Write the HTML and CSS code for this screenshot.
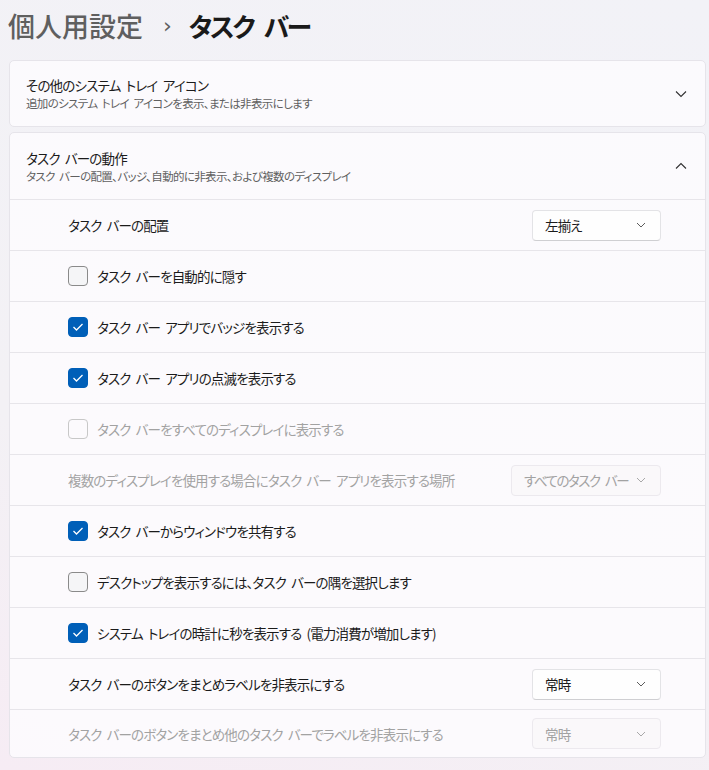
FILE: index.html
```html
<!DOCTYPE html>
<html lang="ja">
<head>
<meta charset="utf-8">
<link rel="stylesheet" href="styles.css">
</head>
<body>
<div class="page">
  <h1 class="crumb"><span class="parent">個人用設定</span><span class="sep">›</span><span class="current">タスク バー</span></h1>

  <section class="card">
    <div class="head short">
      <div class="htext">
        <div class="title">その他のシステム トレイ アイコン</div>
        <div class="sub">追加のシステム トレイ アイコンを表示、または非表示にします</div>
      </div>
      <svg class="chev" width="12" height="8" viewBox="0 0 12 8"><path d="M1 1.5 L6 6.5 L11 1.5" fill="none" stroke="#303030" stroke-width="1.1"/></svg>
    </div>
  </section>

  <section class="card">
    <div class="head">
      <div class="htext">
        <div class="title">タスク バーの動作</div>
        <div class="sub">タスク バーの配置、バッジ、自動的に非表示、および複数のディスプレイ</div>
      </div>
      <svg class="chev" width="12" height="8" viewBox="0 0 12 8"><path d="M1 6.5 L6 1.5 L11 6.5" fill="none" stroke="#303030" stroke-width="1.1"/></svg>
    </div>

    <div class="row">
      <span class="label">タスク バーの配置</span>
      <div class="select"><span>左揃え</span><svg width="10" height="6" viewBox="0 0 10 6"><path d="M1 1 L5 5 L9 1" fill="none" stroke="#5c5c5c" stroke-width="1"/></svg></div>
    </div>
    <div class="row">
      <span class="box"></span><span class="label">タスク バーを自動的に隠す</span>
    </div>
    <div class="row">
      <span class="box on"><svg width="12" height="10" viewBox="0 0 12 10"><path d="M1.5 5 L4.5 8 L10.5 2" fill="none" stroke="#fff" stroke-width="1.3"/></svg></span><span class="label">タスク バー アプリでバッジを表示する</span>
    </div>
    <div class="row">
      <span class="box on"><svg width="12" height="10" viewBox="0 0 12 10"><path d="M1.5 5 L4.5 8 L10.5 2" fill="none" stroke="#fff" stroke-width="1.3"/></svg></span><span class="label">タスク バー アプリの点滅を表示する</span>
    </div>
    <div class="row disabled">
      <span class="box"></span><span class="label">タスク バーをすべてのディスプレイに表示する</span>
    </div>
    <div class="row disabled">
      <span class="label">複数のディスプレイを使用する場合にタスク バー アプリを表示する場所</span>
      <div class="select wide"><span>すべてのタスク バー</span><svg width="10" height="6" viewBox="0 0 10 6"><path d="M1 1 L5 5 L9 1" fill="none" stroke="#a8a8a8" stroke-width="1"/></svg></div>
    </div>
    <div class="row">
      <span class="box on"><svg width="12" height="10" viewBox="0 0 12 10"><path d="M1.5 5 L4.5 8 L10.5 2" fill="none" stroke="#fff" stroke-width="1.3"/></svg></span><span class="label">タスク バーからウィンドウを共有する</span>
    </div>
    <div class="row">
      <span class="box"></span><span class="label">デスクトップを表示するには、タスク バーの隅を選択します</span>
    </div>
    <div class="row">
      <span class="box on"><svg width="12" height="10" viewBox="0 0 12 10"><path d="M1.5 5 L4.5 8 L10.5 2" fill="none" stroke="#fff" stroke-width="1.3"/></svg></span><span class="label">システム トレイの時計に秒を表示する (電力消費が増加します)</span>
    </div>
    <div class="row">
      <span class="label">タスク バーのボタンをまとめラベルを非表示にする</span>
      <div class="select"><span>常時</span><svg width="10" height="6" viewBox="0 0 10 6"><path d="M1 1 L5 5 L9 1" fill="none" stroke="#5c5c5c" stroke-width="1"/></svg></div>
    </div>
    <div class="row disabled last">
      <span class="label">タスク バーのボタンをまとめ他のタスク バーでラベルを非表示にする</span>
      <div class="select"><span>常時</span><svg width="10" height="6" viewBox="0 0 10 6"><path d="M1 1 L5 5 L9 1" fill="none" stroke="#a8a8a8" stroke-width="1"/></svg></div>
    </div>
  </section>
</div>
</body>
</html>
```

FILE: styles.css
```css
html, body {
  margin: 0;
  padding: 0;
}
body {
  width: 709px;
  height: 770px;
  overflow: hidden;
  font-family: "Noto Sans CJK JP", "Noto Sans", sans-serif;
  font-feature-settings: "palt";
  color: #1b1b1b;
  background: linear-gradient(20deg, #f6ecf4 0%, #f3f1f5 35%, #f2f2f7 100%);
}
.page {
  padding: 0 3px 0 9px;
  display: flex;
  flex-direction: column;
  gap: 5px;
}
.crumb {
  margin: 0;
  height: 55px;
  display: flex;
  align-items: center;
  font-size: 27px;
  font-weight: 500;
  line-height: 1;
  padding-bottom: 4px;
  box-sizing: border-box;
}
.crumb .parent {
  color: #5f5f5f;
  margin-left: -1px;
}
.crumb .sep {
  color: #5f5f5f;
  font-size: 22px;
  margin: 0 17px 0 20px;
  font-family: "DejaVu Sans", sans-serif;
  font-weight: 400;
}
.crumb .current {
  color: #1a1a1a;
  font-weight: 700;
  font-size: 26px;
  letter-spacing: -2.4px;
  word-spacing: 7px;
}
.card {
  background: rgba(253, 252, 254, 0.85);
  border: 1px solid #e6e4ea;
  border-radius: 5px;
  display: flex;
  flex-direction: column;
}
.head {
  height: 66px;
  display: flex;
  align-items: center;
  padding: 0 18px 0 16px;
}
.head.short {
  height: 65px;
}
.htext {
  flex: 1;
  display: flex;
  flex-direction: column;
  gap: 1px;
}
.title {
  font-size: 13.5px;
  line-height: 18px;
  letter-spacing: -0.8px;
  word-spacing: 3px;
  color: #1b1b1b;
}
.sub {
  font-size: 11.5px;
  line-height: 16px;
  letter-spacing: -0.65px;
  word-spacing: 2.5px;
  color: #606060;
}
.row {
  height: 50px;
  border-top: 1px solid #e7e5ea;
  display: flex;
  align-items: center;
  padding: 0 44px 0 58px;
  font-size: 13.5px;
  letter-spacing: -0.85px;
  word-spacing: 3px;
}
.row.last {
  height: 47px;
}
.row .label {
  flex: 1;
  white-space: nowrap;
}
.box {
  width: 18px;
  height: 18px;
  border: 1px solid #8a8a8a;
  border-radius: 4px;
  background: #f5f5f7;
  margin-right: 9px;
  display: flex;
  align-items: center;
  justify-content: center;
  flex: none;
}
.box.on {
  background: #005fb8;
  border-color: #005fb8;
}
.select {
  width: 129px;
  height: 31px;
  box-sizing: border-box;
  border: 1px solid #e3e3e6;
  border-bottom-color: #cfcfd2;
  border-radius: 4px;
  background: #fefefe;
  display: flex;
  align-items: center;
  justify-content: space-between;
  padding: 0 14px 0 12px;
  font-size: 13.5px;
  color: #1b1b1b;
  white-space: nowrap;
  flex: none;
}
.select.wide {
  width: 150px;
  letter-spacing: -1.5px;
  word-spacing: 4px;
}
.disabled .label,
.disabled .select {
  color: #a2a2a2;
}
.disabled .box {
  border-color: #c8c8c8;
  background: transparent;
}
.disabled .select {
  background: #faf8fa;
  border-color: #ece9ee;
}
```
